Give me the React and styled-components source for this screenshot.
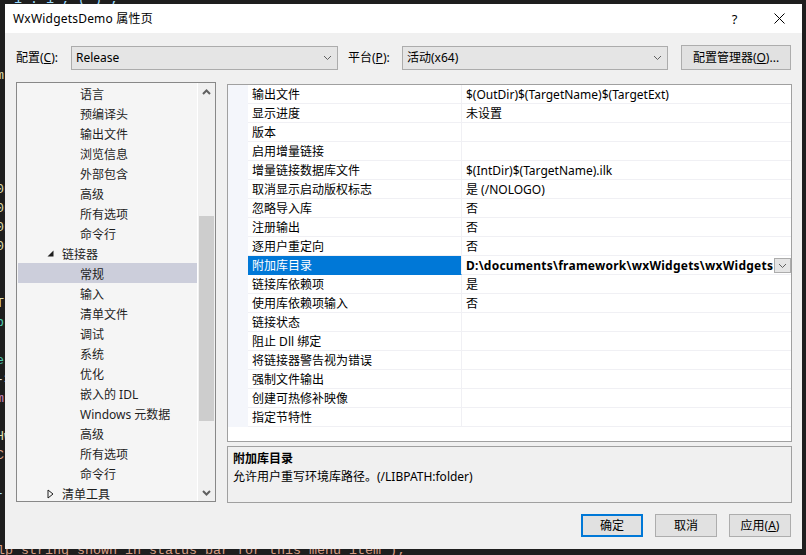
import React from "react";
import styled, { createGlobalStyle } from "styled-components";

const Global = createGlobalStyle`
  html, body { margin: 0; padding: 0; background: #1e1e1e; }
  body {
    width: 806px; height: 555px; overflow: hidden;
    font-family: "Noto Sans", "Noto Sans CJK SC", sans-serif;
    font-size: 12px; color: #000;
  }
`;

const Desktop = styled.div`
  position: relative;
  width: 806px;
  height: 555px;
  overflow: hidden;
  background: #1e1e1e;
`;

const CodeLayer = styled.pre`
  margin: -10px 0 0 0;
  font-family: "Liberation Mono", monospace;
  font-size: 13.33px;
  line-height: 19px;
  white-space: pre;
`;

const CodeLine = styled.div`
  color: ${(p) => p.$c || "#dcdcdc"};
  text-indent: ${(p) => p.$indent || 0}px;
  height: 19px;
`;

const Dialog = styled.div`
  position: absolute;
  left: 5px;
  top: 4px;
  width: 797px;
  height: 545px;
  background: #f0f0f0;
  display: flex;
  flex-direction: column;
`;

const TitleBar = styled.div`
  height: 29px;
  background: #fff;
  display: flex;
  align-items: center;
  padding-left: 8px;
  flex: none;
`;

const Title = styled.div`
  flex: 1;
  font-size: 12px;
  line-height: 16px;
  letter-spacing: 0.2px;
`;

const CaptionButton = styled.div`
  width: 46px;
  height: 29px;
  display: flex;
  align-items: center;
  justify-content: center;
  font-size: 13px;
  color: #000;
  padding-left: ${(p) => p.$pl || 0}px;
  box-sizing: border-box;
`;

const Body = styled.div`
  flex: 1;
  display: flex;
  flex-direction: column;
  padding: 12px 10px 0 11px;
`;

const ConfigRow = styled.div`
  display: flex;
  align-items: center;
  height: 25px;
`;

const Label = styled.div`
  width: ${(p) => p.$w}px;
  flex: none;
  line-height: 16px;
  white-space: nowrap;
`;

const U = styled.span`
  text-decoration: underline;
`;

const Combo = styled.div`
  width: ${(p) => p.$w}px;
  flex: none;
  height: 24px;
  box-sizing: border-box;
  border: 1px solid #acacac;
  background: #e5e5e5;
  display: flex;
  align-items: center;
  padding: 0 5px 0 4px;
  margin-right: ${(p) => p.$mr}px;
  margin-top: 1px;
`;

const ComboText = styled.div`
  flex: 1;
  line-height: 16px;
`;

const Button = styled.div`
  width: ${(p) => p.$w || 62}px;
  height: ${(p) => p.$h || 23}px;
  flex: none;
  box-sizing: border-box;
  border: ${(p) => (p.$default ? "2px solid #0078d7" : "1px solid #adadad")};
  background: #e1e1e1;
  display: flex;
  align-items: center;
  justify-content: center;
  line-height: 16px;
  white-space: nowrap;
`;

const Main = styled.div`
  margin-top: 12px;
  height: 421px;
  display: flex;
  gap: 11px;
  align-items: flex-start;
`;

const TreePanel = styled.div`
  width: 200px;
  height: 420px;
  box-sizing: border-box;
  border: 1px solid #888;
  background: #f5f5f5;
  display: flex;
  overflow: hidden;
`;

const TreeList = styled.div`
  flex: 1;
  overflow: hidden;
  padding-left: 1px;
  border-right: 1px solid #fff;
`;

const TreeItem = styled.div`
  height: 20px;
  box-sizing: border-box;
  display: flex;
  align-items: center;
  padding-top: 3px;
  padding-left: ${(p) => (p.$parent ? 29 : 62)}px;
  background: ${(p) => (p.$selected ? "#cccedb" : "transparent")};
  line-height: 16px;
  white-space: nowrap;
  color: #1e1e1e;
`;

const Expander = styled.span`
  width: 15px;
  display: inline-flex;
  align-items: center;
  justify-content: flex-start;
  margin-top: -2px;
`;

const ScrollBar = styled.div`
  width: 17px;
  background: #f0f0f0;
  display: flex;
  flex-direction: column;
`;

const ScrollArrow = styled.div`
  height: 17px;
  display: flex;
  align-items: center;
  justify-content: center;
  flex: none;
`;

const ScrollTrack = styled.div`
  flex: 1;
  display: flex;
  flex-direction: column;
  align-items: center;
`;

const Thumb = styled.div`
  width: 15px;
  margin-top: ${(p) => p.$top}px;
  height: ${(p) => p.$h}px;
  background: #cdcdcd;
`;

const RightCol = styled.div`
  margin-top: 2px;
  width: 565px;
  display: flex;
  flex-direction: column;
  gap: 4px;
`;

const Grid = styled.div`
  height: 358px;
  box-sizing: border-box;
  border: 1px solid #a0a0a0;
  background: #fff;
  overflow: hidden;
`;

const Row = styled.div`
  display: grid;
  grid-template-columns: 20px 214px 1fr;
  height: 19px;
`;

const Gutter = styled.div`
  background: #f4f6fb;
`;

const NameCell = styled.div`
  box-sizing: border-box;
  border-bottom: 1px solid ${(p) => (p.$selected ? "#0078d7" : "#f0f0f4")};
  border-right: 1px solid #f0f0f4;
  background: ${(p) => (p.$selected ? "#0078d7" : "#fff")};
  color: ${(p) => (p.$selected ? "#fff" : "#000")};
  padding: 2px 0 0 4px;
  line-height: 16px;
  white-space: nowrap;
  overflow: hidden;
`;

const ValueCell = styled.div`
  box-sizing: border-box;
  border-bottom: 1px solid #f0f0f4;
  padding: 0 0 0 4px;
  font-weight: ${(p) => (p.$bold ? 700 : 400)};
  letter-spacing: ${(p) => (p.$bold ? "0.24px" : "0")};
  white-space: nowrap;
  overflow: hidden;
  display: flex;
  align-items: flex-start;
`;

const ValueText = styled.span`
  flex: 1;
  overflow: hidden;
  padding-top: 2px;
  line-height: 16px;
`;

const DropButton = styled.div`
  width: 17px;
  height: 15px;
  margin-top: 2px;
  box-sizing: border-box;
  border: 1px solid #acacac;
  background: #e5e5e5;
  display: flex;
  align-items: center;
  justify-content: center;
  flex: none;
`;

const Desc = styled.div`
  height: 57px;
  box-sizing: border-box;
  border: 1px solid #a0a0a0;
  background: #f0f0f0;
  padding: 3px 5px;
  line-height: 18px;
`;

const DescTitle = styled.div`
  font-weight: 700;
`;

const ButtonRow = styled.div`
  margin-top: 11px;
  display: flex;
  justify-content: flex-end;
  gap: 12px;
  padding-right: 1px;
`;

const Chevron = ({ up, color = "#606060", w = 9, sw = 1 }) => (
  <svg width={w} height="6" viewBox="0 0 9 6">
    <path
      d={up ? "M1 5 L4.5 1.5 L8 5" : "M1 1 L4.5 4.5 L8 1"}
      fill="none"
      stroke={color}
      strokeWidth={sw}
    />
  </svg>
);

const codeLines = [
  ["  1 . 1 , ( ) ;", "#9cdcfe", -2],
  ["", "#dcdcdc", 0],
  ["  wx", "#569cd6", -4],
  ["", "#dcdcdc", 0],
  ["m", "#dcdcaa", -4],
  ["", "#dcdcdc", 0],
  ["", "#dcdcdc", 0],
  ["", "#dcdcdc", 0],
  ["", "#dcdcdc", 0],
  ["", "#dcdcdc", 0],
  ["0n", "#dcdcaa", -4],
  ["0n", "#dcdcaa", -4],
  ["0n", "#dcdcaa", -4],
  ["0n", "#dcdcaa", -4],
  ["", "#dcdcdc", 0],
  ["", "#dcdcdc", 0],
  ["T(", "#dcdcaa", -4],
  ["b", "#4ec9b0", -4],
  ["", "#dcdcdc", 0],
  ["e", "#4ec9b0", -4],
  ["->", "#dcdcdc", -4],
  ["m", "#c586c0", -4],
  ["", "#dcdcdc", 0],
  ["Hw", "#dcdcaa", -4],
  ["Cr", "#d69d85", -4],
  ["", "#dcdcdc", 0],
  ["-", "#9cdcfe", -4],
  ["", "#dcdcdc", 0],
  ["", "#dcdcdc", 0],
  ["Help string shown in status bar for this menu item\");", "#d69d85", -19],
];

const treeItems = [
  { t: "语言" },
  { t: "预编译头" },
  { t: "输出文件" },
  { t: "浏览信息" },
  { t: "外部包含" },
  { t: "高级" },
  { t: "所有选项" },
  { t: "命令行" },
  { t: "链接器", parent: "open" },
  { t: "常规", selected: true },
  { t: "输入" },
  { t: "清单文件" },
  { t: "调试" },
  { t: "系统" },
  { t: "优化" },
  { t: "嵌入的 IDL" },
  { t: "Windows 元数据" },
  { t: "高级" },
  { t: "所有选项" },
  { t: "命令行" },
  { t: "清单工具", parent: "closed" },
];

const props = [
  ["输出文件", "$(OutDir)$(TargetName)$(TargetExt)"],
  ["显示进度", "未设置"],
  ["版本", ""],
  ["启用增量链接", ""],
  ["增量链接数据库文件", "$(IntDir)$(TargetName).ilk"],
  ["取消显示启动版权标志", "是 (/NOLOGO)"],
  ["忽略导入库", "否"],
  ["注册输出", "否"],
  ["逐用户重定向", "否"],
  ["附加库目录", "D:\\documents\\framework\\wxWidgets\\wxWidgets", true],
  ["链接库依赖项", "是"],
  ["使用库依赖项输入", "否"],
  ["链接状态", ""],
  ["阻止 Dll 绑定", ""],
  ["将链接器警告视为错误", ""],
  ["强制文件输出", ""],
  ["创建可热修补映像", ""],
  ["指定节特性", ""],
];

export default function App() {
  return (
    <Desktop>
      <Global />
      <CodeLayer>
        {codeLines.map(([t, c, i], k) => (
          <CodeLine key={k} $c={c} $indent={i}>
            {t}
          </CodeLine>
        ))}
      </CodeLayer>
      <Dialog>
        <TitleBar>
          <Title>WxWidgetsDemo 属性页</Title>
          <CaptionButton $pl={3}>?</CaptionButton>
          <CaptionButton>
            <svg width="11" height="11" viewBox="0 0 11 11">
              <path d="M0.5 0.5 L10.5 10.5 M10.5 0.5 L0.5 10.5" stroke="#000" strokeWidth="1" />
            </svg>
          </CaptionButton>
        </TitleBar>
        <Body>
          <ConfigRow>
            <Label $w={55}>
              配置(<U>C</U>):
            </Label>
            <Combo $w={267} $mr={10}>
              <ComboText>Release</ComboText>
              <Chevron />
            </Combo>
            <Label $w={54}>
              平台(<U>P</U>):
            </Label>
            <Combo $w={266} $mr={13}>
              <ComboText>活动(x64)</ComboText>
              <Chevron />
            </Combo>
            <Button $w={110} $h={25}>
              配置管理器(<U>O</U>)...
            </Button>
          </ConfigRow>
          <Main>
            <TreePanel>
              <TreeList>
                {treeItems.map((it, k) => (
                  <TreeItem key={k} $parent={!!it.parent} $selected={it.selected}>
                    {it.parent && (
                      <Expander>
                        {it.parent === "open" ? (
                          <svg width="7" height="7" viewBox="0 0 7 7">
                            <path d="M6.5 0.5 L6.5 6.5 L0.5 6.5 Z" fill="#1e1e1e" />
                          </svg>
                        ) : (
                          <svg width="7" height="10" viewBox="0 0 7 10">
                            <path d="M1 1 L6 5 L1 9 Z" fill="none" stroke="#1e1e1e" strokeWidth="1" />
                          </svg>
                        )}
                      </Expander>
                    )}
                    {it.t}
                  </TreeItem>
                ))}
              </TreeList>
              <ScrollBar>
                <ScrollArrow>
                  <Chevron up color="#606060" sw={2} />
                </ScrollArrow>
                <ScrollTrack>
                  <Thumb $top={116} $h={205} />
                </ScrollTrack>
                <ScrollArrow>
                  <Chevron color="#606060" sw={2} />
                </ScrollArrow>
              </ScrollBar>
            </TreePanel>
            <RightCol>
              <Grid>
                {props.map(([n, v, sel], k) => (
                  <Row key={k}>
                    <Gutter />
                    <NameCell $selected={sel}>{n}</NameCell>
                    <ValueCell $bold={sel}>
                      <ValueText>{v}</ValueText>
                      {sel && (
                        <DropButton>
                          <Chevron w={9} />
                        </DropButton>
                      )}
                    </ValueCell>
                  </Row>
                ))}
              </Grid>
              <Desc>
                <DescTitle>附加库目录</DescTitle>
                <div>允许用户重写环境库路径。(/LIBPATH:folder)</div>
              </Desc>
            </RightCol>
          </Main>
          <ButtonRow>
            <Button $default>确定</Button>
            <Button>取消</Button>
            <Button>
              应用(<U>A</U>)
            </Button>
          </ButtonRow>
        </Body>
      </Dialog>
    </Desktop>
  );
}
